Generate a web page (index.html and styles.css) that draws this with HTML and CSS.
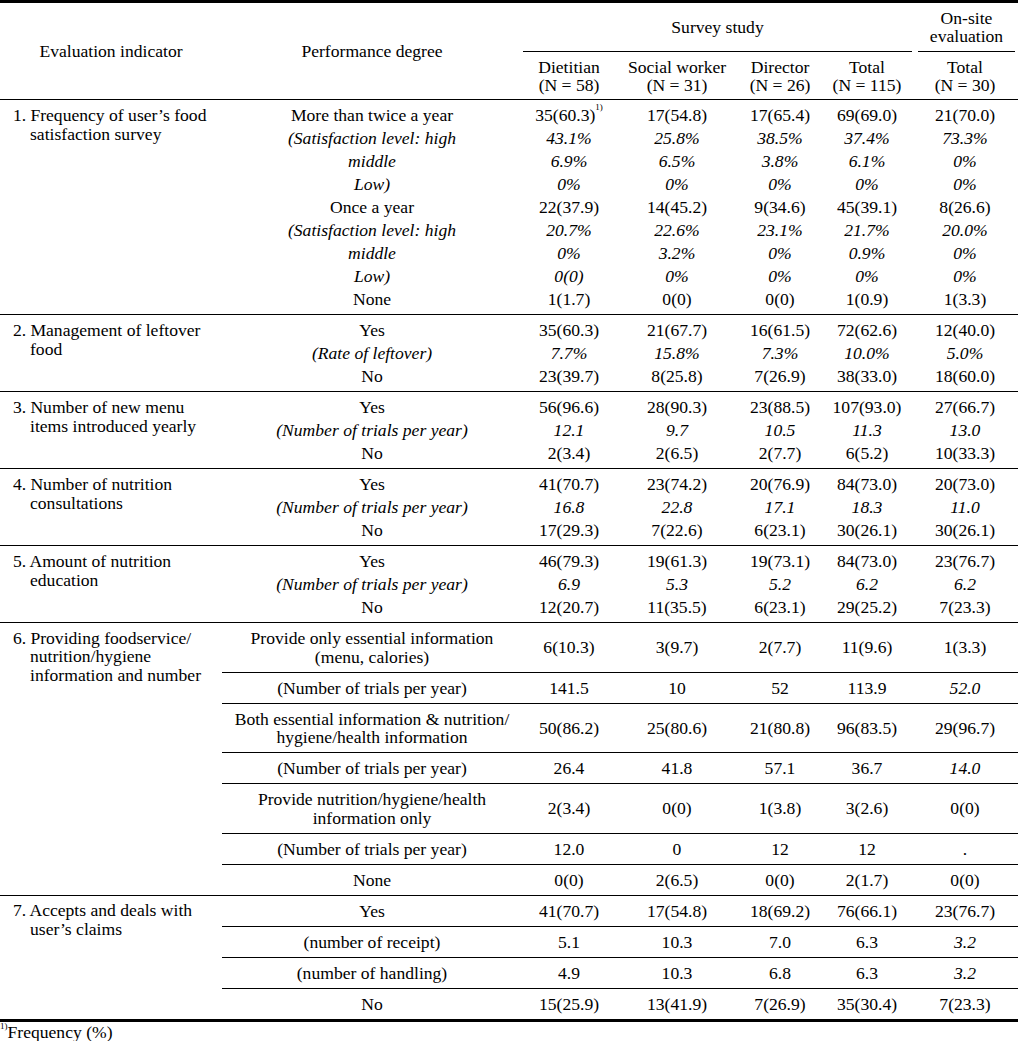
FILE: index.html
```html
<!DOCTYPE html>
<html>
<head>
<meta charset="utf-8">
<link rel="stylesheet" href="styles.css">
</head>
<body>
<table class="tbl">
  <colgroup>
    <col class="c-ind"><col class="c-perf"><col class="c-diet"><col class="c-soc"><col class="c-dir"><col class="c-tot"><col class="c-site">
  </colgroup>
  <thead>
    <tr class="h1">
      <th rowspan="2" class="hcell">Evaluation indicator</th>
      <th rowspan="2" class="hcell">Performance degree</th>
      <th colspan="4" class="grp"><div class="grp-label grp-survey">Survey study</div></th>
      <th class="grp"><div class="grp-label grp-site">On-site<br>evaluation</div></th>
    </tr>
    <tr class="h2">
      <th>Dietitian<br>(N = 58)</th>
      <th>Social worker<br>(N = 31)</th>
      <th>Director<br>(N = 26)</th>
      <th>Total<br>(N = 115)</th>
      <th>Total<br>(N = 30)</th>
    </tr>
  </thead>
  <tbody class="sec">
    <tr class="first">
      <td rowspan="9" class="ind"><span class="num">1.</span> Frequency of user’s food<br>satisfaction survey</td>
      <td>More than twice a year</td><td>35(60.3)<sup class="fn">1)</sup></td><td>17(54.8)</td><td>17(65.4)</td><td>69(69.0)</td><td>21(70.0)</td>
    </tr>
    <tr class="it"><td>(Satisfaction level: high</td><td>43.1%</td><td>25.8%</td><td>38.5%</td><td>37.4%</td><td>73.3%</td></tr>
    <tr class="it"><td>middle</td><td>6.9%</td><td>6.5%</td><td>3.8%</td><td>6.1%</td><td>0%</td></tr>
    <tr class="it"><td>Low)</td><td>0%</td><td>0%</td><td>0%</td><td>0%</td><td>0%</td></tr>
    <tr><td>Once a year</td><td>22(37.9)</td><td>14(45.2)</td><td>9(34.6)</td><td>45(39.1)</td><td>8(26.6)</td></tr>
    <tr class="it"><td>(Satisfaction level: high</td><td>20.7%</td><td>22.6%</td><td>23.1%</td><td>21.7%</td><td>20.0%</td></tr>
    <tr class="it"><td>middle</td><td>0%</td><td>3.2%</td><td>0%</td><td>0.9%</td><td>0%</td></tr>
    <tr class="it"><td>Low)</td><td>0(0)</td><td>0%</td><td>0%</td><td>0%</td><td>0%</td></tr>
    <tr class="last"><td>None</td><td>1(1.7)</td><td>0(0)</td><td>0(0)</td><td>1(0.9)</td><td>1(3.3)</td></tr>
  </tbody>
  <tbody class="sec">
    <tr class="first">
      <td rowspan="3" class="ind"><span class="num">2.</span> Management of leftover<br>food</td>
      <td>Yes</td><td>35(60.3)</td><td>21(67.7)</td><td>16(61.5)</td><td>72(62.6)</td><td>12(40.0)</td>
    </tr>
    <tr class="it"><td>(Rate of leftover)</td><td>7.7%</td><td>15.8%</td><td>7.3%</td><td>10.0%</td><td>5.0%</td></tr>
    <tr class="last"><td>No</td><td>23(39.7)</td><td>8(25.8)</td><td>7(26.9)</td><td>38(33.0)</td><td>18(60.0)</td></tr>
  </tbody>
  <tbody class="sec">
    <tr class="first">
      <td rowspan="3" class="ind"><span class="num">3.</span> Number of new menu<br>items introduced yearly</td>
      <td>Yes</td><td>56(96.6)</td><td>28(90.3)</td><td>23(88.5)</td><td>107(93.0)</td><td>27(66.7)</td>
    </tr>
    <tr class="it"><td>(Number of trials per year)</td><td>12.1</td><td>9.7</td><td>10.5</td><td>11.3</td><td>13.0</td></tr>
    <tr class="last"><td>No</td><td>2(3.4)</td><td>2(6.5)</td><td>2(7.7)</td><td>6(5.2)</td><td>10(33.3)</td></tr>
  </tbody>
  <tbody class="sec">
    <tr class="first">
      <td rowspan="3" class="ind"><span class="num">4.</span> Number of nutrition<br>consultations</td>
      <td>Yes</td><td>41(70.7)</td><td>23(74.2)</td><td>20(76.9)</td><td>84(73.0)</td><td>20(73.0)</td>
    </tr>
    <tr class="it"><td>(Number of trials per year)</td><td>16.8</td><td>22.8</td><td>17.1</td><td>18.3</td><td>11.0</td></tr>
    <tr class="last"><td>No</td><td>17(29.3)</td><td>7(22.6)</td><td>6(23.1)</td><td>30(26.1)</td><td>30(26.1)</td></tr>
  </tbody>
  <tbody class="sec">
    <tr class="first">
      <td rowspan="3" class="ind"><span class="num">5.</span> Amount of nutrition<br>education</td>
      <td>Yes</td><td>46(79.3)</td><td>19(61.3)</td><td>19(73.1)</td><td>84(73.0)</td><td>23(76.7)</td>
    </tr>
    <tr class="it"><td>(Number of trials per year)</td><td>6.9</td><td>5.3</td><td>5.2</td><td>6.2</td><td>6.2</td></tr>
    <tr class="last"><td>No</td><td>12(20.7)</td><td>11(35.5)</td><td>6(23.1)</td><td>29(25.2)</td><td>7(23.3)</td></tr>
  </tbody>
  <tbody class="sec boxed">
    <tr>
      <td rowspan="7" class="ind"><span class="num">6.</span> Providing foodservice/<br>nutrition/hygiene<br>information and number</td>
      <td class="two">Provide only essential information<br>(menu, calories)</td><td>6(10.3)</td><td>3(9.7)</td><td>2(7.7)</td><td>11(9.6)</td><td>1(3.3)</td>
    </tr>
    <tr class="sub"><td>(Number of trials per year)</td><td>141.5</td><td>10</td><td>52</td><td>113.9</td><td class="i">52.0</td></tr>
    <tr class="sub"><td class="two">Both essential information &amp; nutrition/<br>hygiene/health information</td><td>50(86.2)</td><td>25(80.6)</td><td>21(80.8)</td><td>96(83.5)</td><td>29(96.7)</td></tr>
    <tr class="sub"><td>(Number of trials per year)</td><td>26.4</td><td>41.8</td><td>57.1</td><td>36.7</td><td class="i">14.0</td></tr>
    <tr class="sub"><td class="two">Provide nutrition/hygiene/health<br>information only</td><td>2(3.4)</td><td>0(0)</td><td>1(3.8)</td><td>3(2.6)</td><td>0(0)</td></tr>
    <tr class="sub"><td>(Number of trials per year)</td><td>12.0</td><td>0</td><td>12</td><td>12</td><td>.</td></tr>
    <tr class="sub"><td>None</td><td>0(0)</td><td>2(6.5)</td><td>0(0)</td><td>2(1.7)</td><td>0(0)</td></tr>
  </tbody>
  <tbody class="sec boxed">
    <tr>
      <td rowspan="4" class="ind"><span class="num">7.</span> Accepts and deals with<br>user’s claims</td>
      <td>Yes</td><td>41(70.7)</td><td>17(54.8)</td><td>18(69.2)</td><td>76(66.1)</td><td>23(76.7)</td>
    </tr>
    <tr class="sub"><td>(number of receipt)</td><td>5.1</td><td>10.3</td><td>7.0</td><td>6.3</td><td class="i">3.2</td></tr>
    <tr class="sub"><td>(number of handling)</td><td>4.9</td><td>10.3</td><td>6.8</td><td>6.3</td><td class="i">3.2</td></tr>
    <tr class="sub"><td>No</td><td>15(25.9)</td><td>13(41.9)</td><td>7(26.9)</td><td>35(30.4)</td><td>7(23.3)</td></tr>
  </tbody>
</table>
<p class="note"><sup class="fn">1)</sup>Frequency (%)</p>
</body>
</html>
```

FILE: styles.css
```css
html, body {
  margin: 0;
  padding: 0;
  background: #fff;
}

body {
  font-family: "Liberation Serif", "Times New Roman", serif;
  font-size: 17.6px;
  color: #000;
}

.tbl {
  width: 1018px;
  border-collapse: collapse;
  table-layout: fixed;
  border-top: 3px solid #000;
  border-bottom: 3px solid #000;
}

.c-ind { width: 222px; }
.c-perf { width: 300px; }
.c-diet { width: 94px; }
.c-soc { width: 122px; }
.c-dir { width: 84px; }
.c-tot { width: 90px; }
.c-site { width: 106px; }

.tbl th {
  font-weight: normal;
  text-align: center;
  line-height: 18px;
  padding: 0;
}

.tbl thead tr.h1 th.hcell {
  vertical-align: middle;
  border-bottom: 1px solid #000;
}

.tbl th.grp {
  padding: 0;
  vertical-align: bottom;
}

.grp-label {
  height: 49px;
  box-sizing: border-box;
  border-bottom: 1px solid #000;
  display: flex;
  align-items: center;
  justify-content: center;
  padding-bottom: 1px;
}

.grp-survey {
  margin-left: 1px;
  margin-right: 0;
}

.grp-site {
  margin-left: 6px;
  margin-right: 3px;
}

.tbl tr.h2 th {
  height: 47px;
  vertical-align: middle;
  border-bottom: 1px solid #000;
}

.tbl td {
  text-align: center;
  vertical-align: middle;
  padding: 0;
  line-height: 23px;
  white-space: nowrap;
}

.tbl tbody.sec {
  border-top: 1px solid #000;
}

.tbl tr.first td {
  padding-top: 3.5px;
}

.tbl tr.last td {
  padding-bottom: 3.5px;
}

.tbl tr.it td {
  font-style: italic;
}

.tbl td.i {
  font-style: italic;
}

.tbl tr.first td.ind,
.tbl td.ind {
  text-align: left;
  vertical-align: top;
  line-height: 19px;
  padding: 6px 0 0 30px;
  text-indent: -17px;
}

.tbl td.ind .num {
  display: inline-block;
  text-indent: 0;
  width: 13px;
}

.tbl tbody.boxed td {
  line-height: 18.5px;
  padding-top: 6px;
  padding-bottom: 5.5px;
}

.tbl tbody.boxed td.ind {
  line-height: 18.5px;
  padding-top: 5.5px;
  padding-bottom: 0;
}

.tbl tr.sub td {
  border-top: 1px solid #000;
}

.fn {
  font-size: 9px;
  vertical-align: top;
  line-height: 1;
  position: relative;
  top: -1px;
}

.note {
  margin: 1px 0 0 0;
  line-height: 18px;
}
```
